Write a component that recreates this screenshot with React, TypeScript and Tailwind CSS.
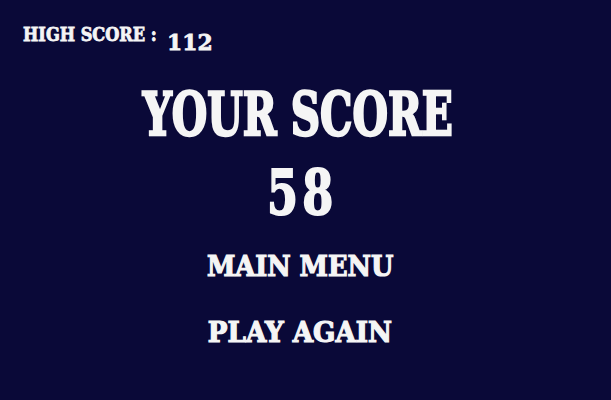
const slab = { fontFamily: '"DejaVu Serif", "Liberation Serif", serif' };

export default function App() {
  const highScore = 112;
  const score = 58;

  return (
    <div
      className="w-[611px] h-[400px] bg-[#0a0938] text-[#f5f5f5] flex flex-col overflow-hidden font-bold"
      style={slab}
    >
      {/* best result, top-left */}
      <div className="flex items-start pl-[23px] pt-[26px] h-[85px]">
        <span className="inline-block origin-left scale-x-[0.9] text-[18px] leading-none whitespace-nowrap [-webkit-text-stroke:0.8px_#f5f5f5]">
          HIGH SCORE :
        </span>
        <span className="inline-block origin-left scale-x-[0.95] mt-[4px] ml-[-5px] text-[23px] leading-none [-webkit-text-stroke:0.8px_#f5f5f5]">
          {highScore}
        </span>
      </div>

      <div className="flex flex-col items-center pr-[11px]">
        <h1 className="ml-[-4px] scale-x-[0.69] text-[59px] leading-none whitespace-nowrap [-webkit-text-stroke:2.5px_#f5f5f5]">
          YOUR SCORE
        </h1>
        <div className="mt-[18px] scale-x-[0.72] text-[62px] leading-none tracking-[6px] pl-[6px] [-webkit-text-stroke:2px_#f5f5f5]">
          {score}
        </div>

        <button className="mt-[29px] scale-x-[0.95] text-[27px] leading-none whitespace-nowrap [-webkit-text-stroke:1.2px_#f5f5f5]">
          MAIN MENU
        </button>
        <button className="mt-[39px] scale-x-[0.97] text-[27px] leading-none whitespace-nowrap [-webkit-text-stroke:1.2px_#f5f5f5]">
          PLAY AGAIN
        </button>
      </div>
    </div>
  );
}
